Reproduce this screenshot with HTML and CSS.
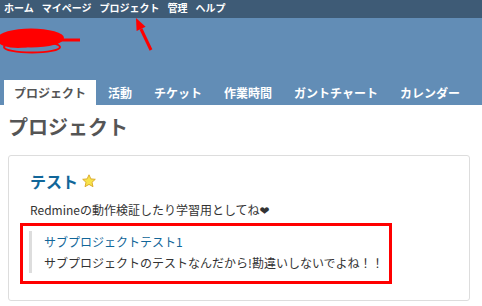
FILE: index.html
```html
<!DOCTYPE html>
<html lang="ja">

<head>
  <meta charset="UTF-8">
  <meta name="viewport" content="width=device-width, initial-scale=1.0">
  <title>プロジェクト - Redmine</title>
  <link rel="stylesheet" href="styles.css">
</head>

<body>
  <div id="top-menu">
    <ul>
      <li><a href="#">ホーム</a></li>
      <li><a href="#">マイページ</a></li>
      <li><a href="#">プロジェクト</a></li>
      <li><a href="#">管理</a></li>
      <li><a href="#">ヘルプ</a></li>
    </ul>
  </div>

  <div id="header">
    <!-- project name blacked out -->
    <svg class="redact" width="82" height="28" viewBox="0 0 82 28">
      <ellipse cx="31" cy="10" rx="33" ry="9.5" fill="#ff0000"/>
      <ellipse cx="18" cy="13" rx="20" ry="7" fill="#ff0000"/>
      <path d="M55 12 L80 12" stroke="#ff0000" stroke-width="3"/>
      <ellipse cx="32" cy="19" rx="28" ry="5.5" fill="none" stroke="#ff0000" stroke-width="2"/>
    </svg>
    <ul id="main-menu">
      <li><a href="#" class="selected">プロジェクト</a></li>
      <li><a href="#">活動</a></li>
      <li><a href="#">チケット</a></li>
      <li><a href="#">作業時間</a></li>
      <li><a href="#">ガントチャート</a></li>
      <li><a href="#">カレンダー</a></li>
    </ul>
  </div>

  <div id="content">
    <h2>プロジェクト</h2>
    <div class="project-box">
      <h3>
        <a href="#">テスト</a>
        <svg class="fav" width="14" height="14" viewBox="0 0 14 14">
          <polygon points="7,0.8 8.9,4.9 13.3,5.3 10,8.3 11,12.7 7,10.4 3,12.7 4,8.3 0.7,5.3 5.1,4.9" fill="#f7e34b" stroke="#d9a623" stroke-width="0.9"/>
        </svg>
      </h3>
      <p class="desc">Redmineの動作検証したり学習用としてね❤</p>
      <div class="marked">
        <div class="child">
          <a href="#">サブプロジェクトテスト1</a>
          <p>サブプロジェクトのテストなんだから!勘違いしないでよね！！</p>
        </div>
      </div>
    </div>
  </div>

  <svg class="arrow" width="30" height="40" viewBox="126 14 30 40">
    <path d="M151 50 L141 29" stroke="#ff0000" stroke-width="3"/>
    <polygon points="136,18 145.6,26.8 136.6,31" fill="#ff0000"/>
  </svg>
</body>

</html>
```

FILE: styles.css
```css
body {
  margin: 0;
  font-family: "Noto Sans CJK JP", "DejaVu Sans", sans-serif;
  color: #333;
  background-color: #fff;
  position: relative;
}

a {
  text-decoration: none;
}

ul {
  list-style: none;
  margin: 0;
  padding: 0;
}

#top-menu {
  background-color: #3e5b76;
  height: 18px;
  padding-left: 4px;
}

#top-menu ul {
  display: flex;
  gap: 8px;
}

#top-menu a {
  display: block;
  color: #fff;
  font-size: 10px;
  font-weight: bold;
  line-height: 16px;
}

#header {
  position: relative;
  background-color: #628db6;
  height: 87px;
  display: flex;
  flex-direction: column;
  justify-content: flex-end;
  padding-left: 4px;
}

.redact {
  position: absolute;
  left: 0;
  top: 10px;
}

#main-menu {
  display: flex;
  gap: 2px;
}

#main-menu a {
  display: block;
  height: 25px;
  line-height: 25px;
  padding: 0 10px;
  font-size: 12px;
  font-weight: bold;
  color: #fff;
}

#main-menu a.selected {
  background-color: #fff;
  color: #555;
}

#content {
  padding: 10px 0 0 8px;
}

#content h2 {
  margin: 0 0 16px;
  font-size: 20px;
  line-height: 24px;
  color: #555;
}

.project-box {
  width: 462px;
  box-sizing: border-box;
  border: 1px solid #ddd;
  border-radius: 3px;
  padding: 15px 0 16px 21px;
}

.project-box h3 {
  margin: 0;
  font-size: 16px;
  line-height: 20px;
  display: flex;
  align-items: center;
}

.project-box h3 a {
  color: #169;
}

.fav {
  margin-left: 4px;
}

.desc {
  margin: 11px 0 5px;
  font-size: 12px;
  line-height: 16px;
}

.marked {
  margin-left: -10px;
  width: 372px;
  box-sizing: border-box;
  border: 3px solid #ff0000;
  padding: 5px 0 8px 6px;
}

.child {
  border-left: 3px solid #ddd;
  padding-left: 12px;
  font-size: 12px;
  line-height: 21px;
}

.child a {
  color: #169;
}

.child p {
  margin: 0;
}

.arrow {
  position: absolute;
  left: 126px;
  top: 14px;
}
```
